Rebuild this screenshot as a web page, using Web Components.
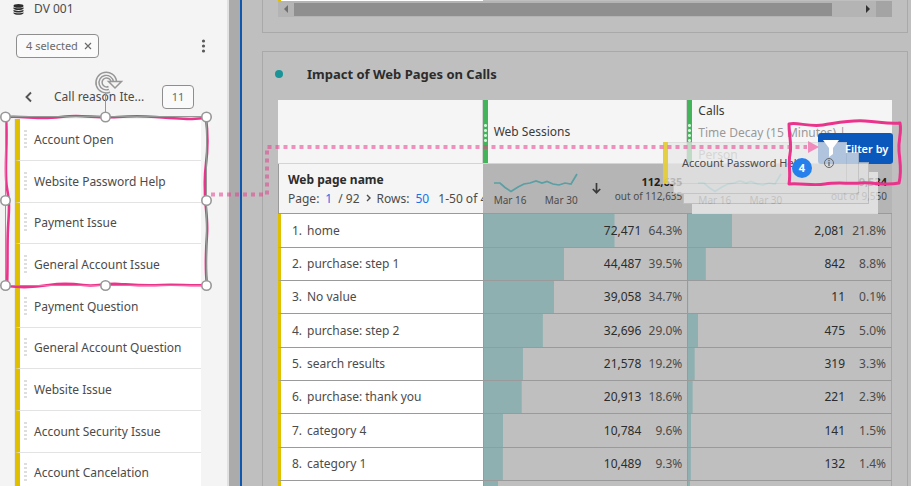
<!DOCTYPE html>
<html lang="en">
<head>
<meta charset="utf-8">
<title>Impact of Web Pages on Calls</title>
<style>
  body { margin: 0; overflow: hidden; font: 12px/16px "Noto Sans", "Open Sans", sans-serif; color: #4b4b4b; }
</style>
</head>
<body>
<app-shell>
  <data-rail slot="rail" source="DV 001" heading="Call reason Ite..." count="11" selected="4 selected">
    <rail-item>Account Open</rail-item>
    <rail-item>Website Password Help</rail-item>
    <rail-item>Payment Issue</rail-item>
    <rail-item>General Account Issue</rail-item>
    <rail-item>Payment Question</rail-item>
    <rail-item>General Account Question</rail-item>
    <rail-item>Website Issue</rail-item>
    <rail-item>Account Security Issue</rail-item>
    <rail-item>Account Cancelation</rail-item>
  </data-rail>
  <work-panel><scroll-strip></scroll-strip></work-panel>
  <work-panel heading="Impact of Web Pages on Calls"><freeform-table></freeform-table></work-panel>
  <filter-button slot="over">Filter by</filter-button>
  <drag-ghost slot="over" count="4">Account Password Help</drag-ghost>
  <pen-marks slot="over"></pen-marks>
</app-shell>

<script>
class Base extends HTMLElement {
  connectedCallback() {
    if (this.shadowRoot) return;
    this.attachShadow({ mode: "open" }).innerHTML = this.view();
  }
  attr(name) { return this.getAttribute(name) || ""; }
}

customElements.define("app-shell", class extends Base {
  view() { return `
    <style>
      :host { display: flex; position: relative; height: 100vh; overflow: hidden; background: #ababab; }
      main { flex: 1; min-width: 0; box-sizing: border-box; margin-left: 11px; padding: 0 3px 0 20px;
        border-left: 2px solid #0d57b0; background: #bfbfbf; display: flex; flex-direction: column; gap: 18px; }
    </style>
    <slot name="rail"></slot>
    <main><slot></slot></main>
    <slot name="over"></slot>`; }
});

customElements.define("data-rail", class extends Base {
  view() { return `
    <style>
      :host { display: block; flex: none; width: 229px; box-sizing: border-box; background: #f4f4f4; border-right: 2px solid #e1e1e1; }
      button { font: inherit; color: inherit; background: none; border: 0; padding: 0; display: flex; align-items: center; }
      svg { display: block; }
      .source { display: flex; align-items: center; gap: 10px; padding: 1px 13px 0; height: 16px; }
      .tools { display: flex; align-items: center; justify-content: space-between; padding: 17px 20px 0 16px; }
      .chip { height: 24px; padding: 0 6px 0 9px; gap: 6px; border: 1px solid #8e8e8e; border-radius: 4px; background: #fafafa; font-size: 11px; color: #6a6a6a; }
      .title { display: flex; align-items: center; padding: 27px 33px 0 24px; height: 24px; }
      .title h2 { flex: 1; margin: 0 0 0 20px; font-size: 12px; font-weight: 400; white-space: nowrap; }
      .count { box-sizing: border-box; width: 32px; height: 24px; line-height: 22px; text-align: center; border: 1px solid #8e8e8e; border-radius: 4px; background: #fafafa; font-size: 11px; color: #6a6a6a; }
      .list { margin: 10px 26px 0 14px; border-left: 1px solid #e6e6ee; }
    </style>
    <div class="source">
      <svg width="11" height="11" viewBox="0 0 11 11" fill="#2c2c2c"><ellipse cx="5.500" cy="1.900" rx="5" ry="1.800"/><path d="M.5 3.200c2 1.500 8 1.500 10 0v1.500c-1.500 1.700-8.500 1.700-10 0zM.5 5.800c2 1.500 8 1.500 10 0v1.400c-1.500 1.700-8.500 1.700-10 0zM.5 8.200c2 1.500 8 1.500 10 0v1.100c-1.500 2-8.500 2-10 0z"/></svg>
      <span>${this.attr("source")}</span>
    </div>
    <div class="tools">
      <button class="chip">${this.attr("selected")}
        <svg width="8" height="8" viewBox="0 0 8 8" stroke="#6a6a6a" stroke-width="1.200"><path d="M1 1l6 6M7 1L1 7"/></svg></button>
      <button aria-label="More"><svg width="7" height="14" viewBox="0 0 7 14" fill="#5a5a5a"><circle cx="3.500" cy="2" r="1.600"/><circle cx="3.500" cy="7" r="1.600"/><circle cx="3.500" cy="12" r="1.600"/></svg></button>
    </div>
    <div class="title">
      <button aria-label="Back"><svg width="10" height="12" viewBox="0 0 10 12" fill="none" stroke="#555" stroke-width="1.900"><path d="M7 1.500L2.500 6 7 10.500"/></svg></button>
      <h2>${this.attr("heading")}</h2>
      <span class="count">${this.attr("count")}</span>
    </div>
    <div class="list"><slot></slot></div>`; }
});

customElements.define("rail-item", class extends Base {
  view() { return `
    <style>
      :host { display: flex; align-items: center; box-sizing: border-box; height: 42px; background: #fff;
        border-left: 5px solid #dfbf00; border-bottom: 1px solid #e3e3e3; white-space: nowrap; }
      :host(:nth-child(3n)) { height: 41px; }
      i { flex: none; width: 3px; height: 20px; margin: 0 7px 0 4px;
        background: repeating-linear-gradient(#dedede 0 2px, #fff 2px 4px); }
    </style><i></i><slot></slot>`; }
});

customElements.define("work-panel", class extends Base {
  view() { const h = this.attr("heading"); return `
    <style>
      :host { display: block; border: 1px solid #a9a9a9; padding: 0 15px; }
      :host(:not([heading])) { border-top: 0; padding-bottom: 15px; }
      header { display: flex; align-items: center; gap: 24px; height: 48px; box-sizing: border-box; padding-bottom: 4px; margin-left: -3px; }
      header::before { content: ""; width: 8px; height: 8px; border-radius: 50%; background: #1a9496; }
      h1 { margin: 0; font-size: 13px; line-height: 18px; font-weight: 700; color: #2c2c2c; white-space: nowrap; }
    </style>
    ${h ? `<header><h1>${h}</h1></header>` : ""}
    <slot></slot>`; }
});

customElements.define("scroll-strip", class extends Base {
  view() { return `
    <style>
      :host { display: block; }
      .peek { display: grid; grid-template-columns: 1fr 2fr; height: 1px; }
      .peek i { background: #fff; border-left: 3px solid #dfbf00; }
      .bar { display: flex; align-items: center; height: 16px; background: #b4b4b4; }
      button { border: 0; padding: 0; background: none; width: 16px; height: 16px; }
      svg { display: block; margin: auto; }
      .track { flex: 1; height: 13px; }
      .thumb { width: 95%; height: 13px; background: #8f8f8f; }
      .corner { width: 16px; height: 16px; background: #a4a4a4; }
    </style>
    <div class="peek"><i></i></div>
    <div class="bar">
      <button aria-label="Scroll left"><svg width="6" height="8"><path d="M5 0v8L1 4z" fill="#6f6f6f"/></svg></button>
      <div class="track"><div class="thumb"></div></div>
      <button aria-label="Scroll right"><svg width="6" height="8"><path d="M1 0v8l4-4z" fill="#333"/></svg></button>
      <div class="corner"></div>
    </div>`; }
});

customElements.define("spark-line", class extends Base {
  view() { return `
    <style>
      :host { display: block; width: 84px; font-size: 10px; line-height: 12px; }
      svg { display: block; overflow: visible; }
      div { display: flex; justify-content: space-between; white-space: nowrap; }
    </style>
    <svg width="84" height="22" fill="none" stroke="#5a9fa3" stroke-width="1.700"><path d="M0 11h6l5 4.500 6 4 7-4.500 6-3 6-1 6-2 6 2 5-1.500 6 2.500 6 1 6-2 6 1 6-10"/></svg>
    <div><span>Mar 16</span><span>${this.attr("end")}</span></div>`; }
});

customElements.define("freeform-table", class extends Base {
  view() {
    const rows = [
      ["home", "72,471", "64.3%", "2,081", "21.8%"],
      ["purchase: step 1", "44,487", "39.5%", "842", "8.8%"],
      ["No value", "39,058", "34.7%", "11", "0.1%"],
      ["purchase: step 2", "32,696", "29.0%", "475", "5.0%"],
      ["search results", "21,578", "19.2%", "319", "3.3%"],
      ["purchase: thank you", "20,913", "18.6%", "221", "2.3%"],
      ["category 4", "10,784", "9.6%", "141", "1.5%"],
      ["category 1", "10,489", "9.3%", "132", "1.4%"]];
    const metric = (v, p) => `<td class="m" style="--p:${p}"><div class="cell"><b>${v}</b><span>${p}</span></div></td>`;
    const body = rows.map((r, i) => `<tr><th scope="row"><div class="name"><span>${i + 1}.</span>${r[0]}</div></th>${metric(r[1], r[2])}${metric(r[3], r[4])}</tr>`).join("");
    const total = (v, o, arrow) => `<td class="t"><div class="sum"><spark-line end="Mar 30"></spark-line>${arrow}<div class="tot"><b>${v}</b>out of ${o}</div></div></td>`;
    return `
    <style>
      :host { display: block; }
      table { width: 100%; table-layout: fixed; border-collapse: separate; border-spacing: 0; }
      th, td { padding: 0; font-weight: 400; text-align: left; box-sizing: border-box; border-bottom: 1px solid #9a9a9a; }
      thead th { height: 64px; background: #f5f5f5; border-bottom-color: #d4d4d4; border-right: 1px solid #d4d4d4; }
      thead th:last-child { border-right: 0; }
      .metric { display: flex; height: 63px; color: #3a3a3a; line-height: 22px; }
      .metric::before { content: ""; flex: none; width: 5px; margin-right: 6px;
        background: radial-gradient(circle, #d5f5da 1px, transparent 2px) 0 23px / 5px 5px no-repeat,
          radial-gradient(circle, #d5f5da 1px, transparent 2px) 0 28px / 5px 5px no-repeat,
          radial-gradient(circle, #d5f5da 1px, transparent 2px) 0 33px / 5px 5px no-repeat,
          radial-gradient(circle, #d5f5da 1px, transparent 2px) 0 38px / 5px 5px no-repeat, #43b45a; }
      .metric div { align-self: center; white-space: nowrap; }
      .metric div.top { align-self: start; }
      small { display: block; font-size: 12px; color: #999; }
      .head td { height: 50px; background: #b5b5b5; }
      .head td.dim { background: #f5f5f5; overflow: hidden; white-space: nowrap; border-left: 1px solid #9a9a9a; padding-left: 9px; line-height: 19px; font-size: 12px; }
      .dim strong { display: block; color: #2c2c2c; }
      .pager { display: flex; gap: 6px; align-items: center; }
      .pager > * { flex: none; }
      .pager a { color: #1473e6; text-decoration: none; }
      .sum { display: flex; align-items: flex-end; justify-content: space-between; padding: 0 5px 0 11px; }
      .sum .sort { align-self: center; }
      .tot { text-align: right; font-size: 10px; line-height: 14px; white-space: nowrap; padding-bottom: 3px; }
      .tot b { display: block; font-size: 11px; color: #1f1f1f; }
      tbody tr:not(.head) > * { height: 33px; }
      tbody tr:nth-child(3n + 2) > * { height: 34px; }
      tbody th { background: #fff; border-left: 3px solid #dfbf00; }
      .name { display: flex; gap: 5px; }
      .name span { width: 21px; text-align: right; }
      .m { border-left: 1px solid #9a9a9a; background: linear-gradient(#8fb0b1, #8fb0b1) left / var(--p) 100% no-repeat; }
      .m:last-child { border-right: 1px solid #a6a6a6; }
      .cell { display: flex; justify-content: flex-end; padding-right: 5px; }
      .cell b { font-weight: 400; color: #2c2c2c; }
      .cell span { width: 41px; text-align: right; }
    </style>
    <table>
      <thead><tr><th></th>
        <th scope="col"><div class="metric"><div>Web Sessions</div></div></th>
        <th scope="col"><div class="metric"><div class="top">Calls<small>Time Decay (15 Minutes) |</small><small>Person</small></div></div></th></tr></thead>
      <tbody>
        <tr class="head"><td class="dim"><strong>Web page name</strong>
          <div class="pager"><span>Page:</span><a href="#page">1</a><span>/ 92</span>
          <svg width="5" height="8" fill="none" stroke="#4b4b4b" stroke-width="1.400"><path d="M1 1l3 3-3 3"/></svg>
          <span>Rows:</span><a href="#rows">50</a><span>&nbsp;1-50 of 4</span></div></td>
          ${total("112,635", "112,635", `<svg class="sort" width="9" height="11" fill="none" stroke="#3a3a3a" stroke-width="1.700"><path d="M4.500 0v9.500M.8 6l3.700 3.700L8.200 6"/></svg>`)}
          ${total("9,534", "9,550", "")}</tr>
        ${body}
        <tr><th></th><td class="m" style="--p:7%"></td><td class="m" style="--p:1%"></td></tr>
      </tbody>
    </table>`; }
});

customElements.define("filter-button", class extends Base {
  view() { return `
    <style>
      :host { position: absolute; left: 818px; top: 133px; }
      button { display: flex; align-items: center; gap: 6px; height: 31px; padding: 0 5px; border: 0; border-radius: 3px; background: #0b58bd; color: #fff; font: 600 11px/16px "Noto Sans", sans-serif; white-space: nowrap; }
      svg, span { position: relative; z-index: 1; }
    </style>
    <button><svg width="16" height="17" fill="#fff"><path d="M0 0h16L10 8v6l-4 3V8z"/></svg><span><slot></slot></span></button>`; }
});

customElements.define("drag-ghost", class extends Base {
  view() { return `
    <style>
      :host { position: absolute; left: 663px; top: 142px; width: 215px; height: 72px; }
      .stack { position: absolute; inset: 0; opacity: .75; }
      .stack i { position: absolute; box-sizing: border-box; width: 186px; height: 42px; background: #e9e9e9; border: 1px solid #d8d8d8; }
      .stack i:nth-child(1) { left: 29px; top: 30px; border-color: #eee; background: #eee; }
      .stack i:nth-child(2) { left: 20px; top: 20px; border-color: #c2c2c2; }
      .stack i:nth-child(3) { left: 10px; top: 10px; border-color: #c9c9c9; }
      .stack i:nth-child(4) { left: 0; top: 0; width: 184px; }
      .front { position: absolute; left: 0; top: 0; height: 41px; display: flex; align-items: center; gap: 20px; padding-left: 14px; border-left: 5px solid rgba(228, 202, 40, .85); color: #4b4b4b; font-size: 11px; white-space: nowrap; }
      .count { position: absolute; left: 129px; top: 16px; width: 20px; height: 20px; border-radius: 50%; background: #2680eb; color: #fff; font-size: 11px; font-weight: 700; line-height: 20px; text-align: center; }
    </style>
    <div class="stack"><i></i><i></i><i></i><i></i></div>
    <div class="front"><slot></slot><svg width="12" height="12" fill="none" stroke="#666"><circle cx="6" cy="6" r="4.500"/><path d="M6 5v4M6 3v1.200" stroke-width="1.300"/></svg></div>
    <span class="count">${this.attr("count")}</span>`; }
});

customElements.define("pen-marks", class extends Base {
  view() {
    const knobs = [[5.5, 117], [105.5, 117], [206.5, 117], [5.5, 200.5], [206.5, 200.5], [5.5, 285.5], [105.5, 285.5], [206.5, 285.5]];
    return `
    <style>
      :host { position: absolute; inset: 0; pointer-events: none; z-index: 2; }
      svg { display: block; width: 100%; height: 100%; }
    </style>
    <svg fill="none">
      <g stroke="#ea338b" stroke-width="3" stroke-linejoin="round">
        <path d="M6 117c14-1 25 1 38 1s20-2 32-2 28 2 42 1 24-1 38 0 28 2 36 2l14-1c2 16 2 30 0 46s-1 20-1 30 3 25 2 40-2 34 0 51c-16 1-30-1-46 0s-26 0-42-1-22 3-36 1-22-2-34 0-26 3-42 1c1-20 0-40 1-58s2-24-1-40 1-44-1-71z" stroke-width="2.600"/>
        <path d="M789 124c8-2 20 3 34 1s26-5 42-4 22 3 35 2c2 10-2 16-1 28s3 21 0 32c-14 3-26-1-38 0s-24-1-36 1-24-1-36 0c2-12-1-20 1-30s-1-18-1-30z"/>
      </g>
      <g stroke="#e83e8c" stroke-opacity=".55" stroke-width="4" stroke-dasharray="4 4"><path d="M211 194.500h56V147h540"/></g>
      <path d="M808 141l11 6-11 6z" fill="#f08bbb"/>
      <g stroke="#979797">
        <path d="M5.500 116.500h201v169H5.500zM105.500 117V91"/>
        <g fill="#fff" stroke-width="1.600">${knobs.map(k => `<circle cx="${k[0]}" cy="${k[1]}" r="4.700"/>`).join("")}</g>
      </g>
      <g transform="translate(106.500 82.500)" stroke="#979797">
        <path d="M8.500 -1A8.800 8.800 0 1 0 3 8.300" stroke-width="4.600"/>
        <path d="M8.500 -1A8.800 8.800 0 1 0 3 8.300" stroke="#f4f4f4" stroke-width="1.700"/>
        <path d="M4.500 -1H15L8.500 5.500 2 -1h3" fill="#f4f4f4" stroke-width="1.500"/>
        <path d="M4.500 -1A4.500 4.500 0 1 0 2 4" stroke-width="1.500"/>
      </g>
    </svg>`; }
});
</script>
</body>
</html>
